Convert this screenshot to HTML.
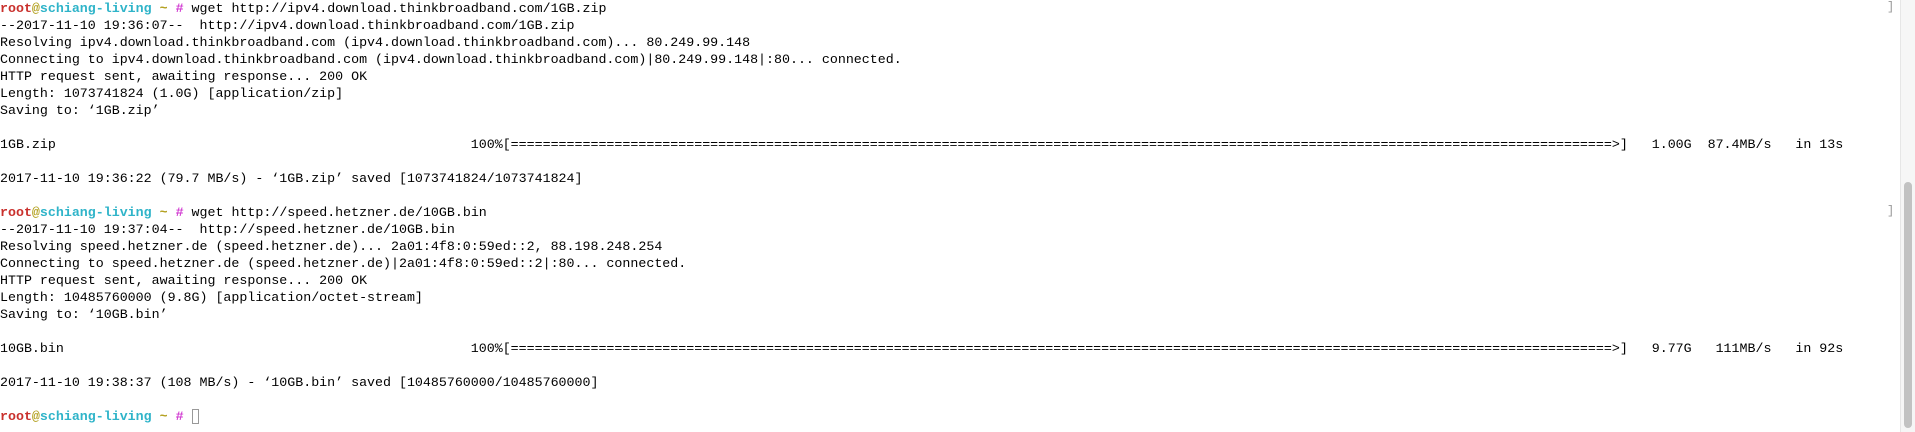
<!DOCTYPE html>
<html><head><meta charset="utf-8"><style>
html,body{margin:0;padding:0;background:#fff;width:1915px;height:432px;overflow:hidden;position:relative}
pre{margin:0;position:absolute;left:0;top:0;font-family:"Liberation Mono",monospace;font-size:13.3px;line-height:17px;color:#000;white-space:pre}
.r{color:#c9302c;font-weight:bold}.y{color:#b3a020;font-weight:bold}.c{color:#2fb4c9;font-weight:bold}.m{color:#d13bd1;font-weight:bold}
.cur{display:inline-block;width:7px;height:15px;border:1px solid #999;vertical-align:-4px;box-sizing:border-box}
.sb{position:absolute;left:1900px;top:0;width:15px;height:432px;background:#f6f6f6;border-left:1px solid #e6e6e6}
.th{position:absolute;left:1904px;top:182px;width:8px;height:246px;background:#c2c2c2;border-radius:4px}
.br{position:absolute;left:1887px;color:#999;font-family:"Liberation Mono",monospace;font-size:12px}
</style></head><body>
<pre><span class="r">root</span><span class="y">@</span><span class="c">schiang-living</span> <span class="y">~</span> <span class="m">#</span> wget http://ipv4.download.thinkbroadband.com/1GB.zip
--2017-11-10 19:36:07--  http://ipv4.download.thinkbroadband.com/1GB.zip
Resolving ipv4.download.thinkbroadband.com (ipv4.download.thinkbroadband.com)... 80.249.99.148
Connecting to ipv4.download.thinkbroadband.com (ipv4.download.thinkbroadband.com)|80.249.99.148|:80... connected.
HTTP request sent, awaiting response... 200 OK
Length: 1073741824 (1.0G) [application/zip]
Saving to: ‘1GB.zip’

1GB.zip                                                    100%[==========================================================================================================================================>]   1.00G  87.4MB/s   in 13s

2017-11-10 19:36:22 (79.7 MB/s) - ‘1GB.zip’ saved [1073741824/1073741824]

<span class="r">root</span><span class="y">@</span><span class="c">schiang-living</span> <span class="y">~</span> <span class="m">#</span> wget http://speed.hetzner.de/10GB.bin
--2017-11-10 19:37:04--  http://speed.hetzner.de/10GB.bin
Resolving speed.hetzner.de (speed.hetzner.de)... 2a01:4f8:0:59ed::2, 88.198.248.254
Connecting to speed.hetzner.de (speed.hetzner.de)|2a01:4f8:0:59ed::2|:80... connected.
HTTP request sent, awaiting response... 200 OK
Length: 10485760000 (9.8G) [application/octet-stream]
Saving to: ‘10GB.bin’

10GB.bin                                                   100%[==========================================================================================================================================>]   9.77G   111MB/s   in 92s

2017-11-10 19:38:37 (108 MB/s) - ‘10GB.bin’ saved [10485760000/10485760000]

<span class="r">root</span><span class="y">@</span><span class="c">schiang-living</span> <span class="y">~</span> <span class="m">#</span> <span class="cur"></span></pre>
<div class="br" style="top:0px">]</div>
<div class="br" style="top:204px">]</div>
<div class="sb"></div><div class="th"></div>
</body></html>
